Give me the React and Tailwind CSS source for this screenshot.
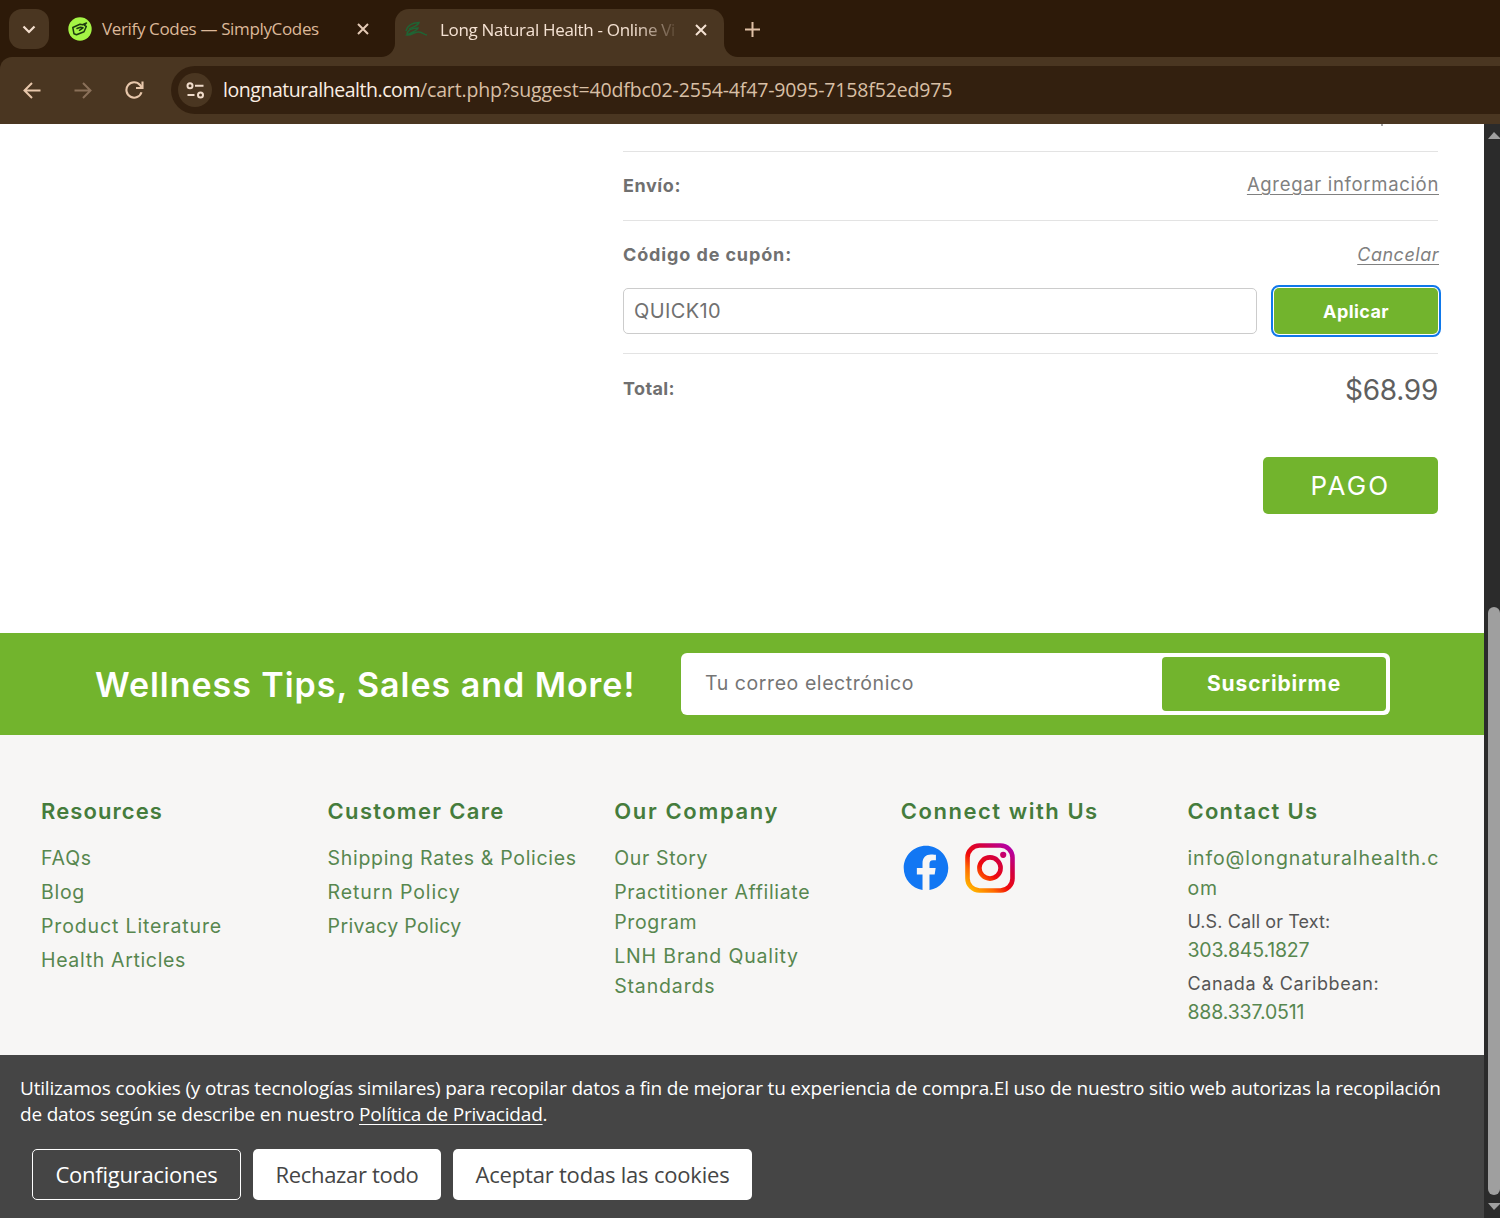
import React, { useState } from 'react';
import { FaFacebook } from 'react-icons/fa';

const columns = [
  {
    title: 'Resources',
    titleClass: 'tracking-[1.09px]',
    links: [
      { label: 'FAQs', cls: 'tracking-[0.8px]' },
      { label: 'Blog', cls: 'tracking-[0.72px]' },
      { label: 'Product Literature', cls: 'tracking-[0.86px]' },
      { label: 'Health Articles', cls: 'tracking-[0.66px]' },
    ],
  },
  {
    title: 'Customer Care',
    titleClass: 'tracking-[1.31px]',
    links: [
      { label: 'Shipping Rates & Policies', cls: 'tracking-[0.68px]' },
      { label: 'Return Policy', cls: 'tracking-[0.89px]' },
      { label: 'Privacy Policy', cls: 'tracking-[0.36px]' },
    ],
  },
  {
    title: 'Our Company',
    titleClass: 'tracking-[1.66px]',
    links: [
      { label: 'Our Story', cls: 'tracking-[0.64px]' },
      { label: 'Practitioner Affiliate Program', cls: 'tracking-[0.67px]' },
      { label: 'LNH Brand Quality Standards', cls: 'tracking-[0.85px]' },
    ],
  },
];

// curved foot of the active tab
const TabFoot = ({ className, flip }) => (
  <svg className={className} width="14" height="14" viewBox="0 0 14 14">
    <path d={flip ? 'M0 0A14 14 0 0 0 14 14H0Z' : 'M14 0A14 14 0 0 1 0 14H14Z'} fill="#4a3621" />
  </svg>
);

const CloseIcon = ({ color }) => (
  <svg width="12" height="12" viewBox="0 0 12 12" fill="none" stroke={color} strokeWidth="2">
    <path d="M1 1l10 10M11 1L1 11" />
  </svg>
);

const InstagramIcon = () => (
  <svg width="50" height="50" viewBox="0 0 50 50" fill="none">
    <defs>
      <linearGradient id="ig" x1="4" y1="50" x2="46" y2="2" gradientUnits="userSpaceOnUse">
        <stop offset="0" stopColor="#ffc800" />
        <stop offset="0.28" stopColor="#ff6a00" />
        <stop offset="0.45" stopColor="#f00a0a" />
        <stop offset="0.68" stopColor="#d5003c" />
        <stop offset="1" stopColor="#b000b4" />
      </linearGradient>
    </defs>
    <rect x="2.5" y="2.5" width="45" height="45" rx="12" stroke="url(#ig)" strokeWidth="4.6" />
    <circle cx="25" cy="25" r="10.6" stroke="url(#ig)" strokeWidth="4.6" />
    <circle cx="38.2" cy="11.8" r="3.1" fill="url(#ig)" />
  </svg>
);

const BrowserBar = () => (
  <header className="h-[124px] bg-[#2d1a09] font-['Open_Sans',sans-serif]">
    <div className="flex h-[57px] items-start">
      <button className="mt-[9px] ml-[9px] flex h-10 w-10 items-center justify-center rounded-[13px] bg-[#4a3621]">
        <svg width="14" height="9" viewBox="0 0 14 9" fill="none" stroke="#f3dfce" strokeWidth="2.2">
          <path d="M1.5 1.5L7 7l5.500-5.500" />
        </svg>
      </button>

      <div className="ml-[19px] flex h-[58px] w-[302px] items-center">
        <svg className="shrink-0" width="24" height="24" viewBox="0 0 24 24" fill="none">
          <circle cx="12" cy="12" r="11.700" fill="#a4f545" />
          <g stroke="#1c3a10" strokeWidth="1.5" strokeLinejoin="round" strokeLinecap="round">
            <path d="M4.800 10.500L12 7.300l2.500.4 4-1.700-2.200 2.200 2 1.300-2.300 5.300-7.500 3-2.500-1z" />
            <path d="M9 11.500l3.500-1.300 2.500.6-3.500 2.500" />
          </g>
        </svg>
        <span className="ml-[10px] w-[242px] text-[17px] tracking-[-0.35px] whitespace-nowrap text-[#dcb899]">
          Verify Codes — SimplyCodes
        </span>
        <span className="ml-[13px] shrink-0">
          <CloseIcon color="#e3c9b4" />
        </span>
      </div>

      <div className="relative mt-[9px] ml-[25px] flex h-12 w-[329px] items-center rounded-t-[14px] bg-[#4a3621] pb-[6px]">
        <TabFoot className="absolute bottom-0 -left-[14px]" />
        <TabFoot className="absolute -right-[14px] bottom-0" flip />
        <svg className="ml-[10px]" width="22" height="18" viewBox="0 0 22 18" fill="none" stroke="#1f6434" strokeWidth="1.500">
          <path d="M1 10C2 5 6 2 14 1.500C13 5 8 6 4 8" />
          <path d="M2 14C2 9 6 7 13 7C12 10 7 11 2 14C7 15 9 10 14 11C18 11.500 19 14 22 14" />
        </svg>
        <span className="ml-[13px] w-[238px] overflow-hidden mask-r-from-[195px] mask-r-to-[240px] text-[17px] tracking-[-0.31px] whitespace-nowrap text-[#f5e2d3]">
          Long Natural Health - Online Vi
        </span>
        <span className="ml-[17px]">
          <CloseIcon color="#f5e2d3" />
        </span>
      </div>

      <svg className="mt-[22px] ml-[21px]" width="15" height="15" viewBox="0 0 15 15" stroke="#dfc0a6" strokeWidth="2">
        <path d="M7.500 0v15M0 7.500h15" />
      </svg>
    </div>

    <div className="flex h-[67px] items-start rounded-tl-[12px] bg-[#4a3621] pt-[9px]">
      <div className="flex h-12 w-[171px] items-center">
        <svg className="ml-[23px]" width="18" height="17" viewBox="0 0 18 17" fill="none" stroke="#e8c7ab" strokeWidth="2">
          <path d="M17.500 8.500H2M9 1L1.500 8.500L9 16" />
        </svg>
        <svg className="ml-[33px]" width="18" height="17" viewBox="0 0 18 17" fill="none" stroke="#8a7059" strokeWidth="2">
          <path d="M0.500 8.500H16M9 1l7.500 7.500L9 16" />
        </svg>
        <svg className="ml-[33px]" width="19" height="18" viewBox="0 0 19 18" fill="none" stroke="#e8c7ab" strokeWidth="2.100">
          <path d="M16.500 11.200A7.700 7.700 0 1 1 15 4l2 2.500" />
          <path d="M17.500 0.500V7H11" />
        </svg>
      </div>
      <div className="flex h-12 flex-1 items-center rounded-l-full bg-[#33200f] pl-[7px]">
        <div className="flex h-[34px] w-[34px] items-center justify-center rounded-full bg-[#4a3621]">
          <svg width="19" height="17" viewBox="0 0 19 17" fill="none" stroke="#f0dccb" strokeWidth="2">
            <circle cx="4" cy="3.700" r="2.500" />
            <path d="M9 3.700h8.500M1.500 13h7" />
            <circle cx="14.500" cy="13" r="2.500" />
          </svg>
        </div>
        <p className="ml-[11px] text-[19.5px] whitespace-nowrap">
          <span className="tracking-[-0.45px] text-[#fbeee3]">longnaturalhealth.com</span>
          <span className="tracking-[-0.16px] text-[#d8bfa5]">
            /cart.php?suggest=40dfbc02-2554-4f47-9095-7158f52ed975
          </span>
        </p>
      </div>
    </div>
  </header>
);

const CartTotals = () => {
  const [coupon, setCoupon] = useState('QUICK10');

  return (
    <section className="h-[509px] bg-white pr-[46px] pl-[623px] text-[18px] text-[#707070]">
      <div className="flex h-7 justify-end border-b border-[#e3e3e3] pr-[55px]">
        <span className="h-[2px] w-[2px] bg-[#a8a8a8]" />
      </div>

      <div className="flex h-[69px] items-center justify-between border-b border-[#e3e3e3] pb-[2px]">
        <strong className="font-bold tracking-[0.57px]">Envío:</strong>
        <a href="#" className="-mr-px text-[18.5px] tracking-[0.68px] text-[#808080] underline underline-offset-[3px]">
          Agregar información
        </a>
      </div>

      <div className="h-[133px] border-b border-[#e3e3e3] pt-5">
        <div className="flex h-[27px] items-center justify-between">
          <strong className="font-bold tracking-[0.88px]">Código de cupón:</strong>
          <a href="#" className="-mr-px tracking-[0.51px] text-[#808080] italic underline underline-offset-[3px]">
            Cancelar
          </a>
        </div>
        <div className="mt-5 flex">
          <input
            type="text"
            className="h-[46px] w-[635px] rounded-[5px] border-[1.5px] border-[#cccccc] px-[10px] text-[20px] tracking-[0.38px] text-[#707070]"
            value={coupon}
            onChange={(e) => setCoupon(e.target.value)}
          />
          <button className="ml-[17px] h-[46px] w-[164px] rounded-[5px] bg-[#72b42d] font-bold tracking-[0.42px] text-white outline-[2.5px] outline-offset-1 outline-[#0f78ea]">
            Aplicar
          </button>
        </div>
      </div>

      <div className="flex h-[68px] items-center justify-between">
        <strong className="font-bold tracking-[0.39px]">Total:</strong>
        <span className="mt-1 text-[28px] tracking-[-0.27px] text-[#5f5f5f]">$68.99</span>
      </div>

      <div className="mt-[35px] flex justify-end">
        <button className="h-[57px] w-[175px] rounded-[5px] bg-[#72b42d] text-[26px] tracking-[2.2px] text-white">
          PAGO
        </button>
      </div>
    </section>
  );
};

const Newsletter = () => (
  <section className="flex h-[102px] items-center bg-[#72b42d] pl-[95px]">
    <h2 className="w-[586px] text-[34px] font-semibold tracking-[0.96px] whitespace-nowrap text-white">
      Wellness Tips, Sales and More!
    </h2>
    <div className="flex h-[62px] w-[709px] rounded-[6px] bg-white p-1">
      <input
        type="email"
        placeholder="Tu correo electrónico"
        className="w-[477px] pl-5 text-[19.5px] tracking-[0.57px] placeholder:text-[#757575]"
      />
      <button className="flex-1 rounded-[4px] bg-[#72b42d] text-[21px] font-bold tracking-[0.85px] text-white">
        Suscribirme
      </button>
    </div>
  </section>
);

const ColumnTitle = ({ className, children }) => (
  <h3 className={`mb-[17px] text-[22px] leading-[30px] font-semibold whitespace-nowrap text-[#457c3c] ${className}`}>
    {children}
  </h3>
);

const Footer = () => (
  <footer className="grid h-[320px] grid-cols-5 bg-[#f7f6f5] pt-[61px] pr-[10px] pl-[41px] text-[19.5px] leading-[30px] text-[#57874f]">
    {columns.map((col) => (
      <div key={col.title} className="pr-[30px]">
        <ColumnTitle className={col.titleClass}>{col.title}</ColumnTitle>
        <ul className="space-y-1">
          {col.links.map((link) => (
            <li key={link.label} className={link.cls}>
              {link.label}
            </li>
          ))}
        </ul>
      </div>
    ))}

    <div>
      <ColumnTitle className="tracking-[1.53px]">Connect with Us</ColumnTitle>
      <div className="flex items-center">
        <FaFacebook className="ml-[2px] h-[46px] w-[46px] text-[#1277f3]" />
        <span className="ml-4">
          <InstagramIcon />
        </span>
      </div>
    </div>

    <div className="whitespace-nowrap">
      <ColumnTitle className="tracking-[1.3px]">Contact Us</ColumnTitle>
      <p className="w-[256px] tracking-[0.9px] break-all whitespace-normal">info@longnaturalhealth.com</p>
      <p className="mt-[5px] text-[18px] leading-7 tracking-[0.11px] text-[#555555]">U.S. Call or Text:</p>
      <p className="leading-7 tracking-[-0.16px]">303.845.1827</p>
      <p className="mt-[5px] text-[18px] leading-[29px] tracking-[0.62px] text-[#555555]">Canada &amp; Caribbean:</p>
      <p className="leading-[29px] tracking-[-0.14px]">888.337.0511</p>
    </div>
  </footer>
);

const CookieBanner = () => (
  <section className="h-[163px] bg-[#454545] pt-5 pl-5 font-['Open_Sans',sans-serif] text-white">
    <p className="text-[19px] leading-[26px] tracking-[-0.183px] whitespace-nowrap">
      Utilizamos cookies (y otras tecnologías similares) para recopilar datos a fin de mejorar tu experiencia de
      compra.El uso de nuestro sitio web autorizas la recopilación
      <br />
      de datos según se describe en nuestro{' '}
      <a href="#" className="underline underline-offset-[3px]">
        Política de Privacidad
      </a>
      .
    </p>
    <div className="mt-[22px] ml-3 flex gap-3 text-[22px]">
      <button className="h-[51px] w-[209px] rounded-[5px] border-[1.5px] border-white tracking-[-0.25px]">
        Configuraciones
      </button>
      <button className="h-[51px] w-[188px] rounded-[5px] bg-white tracking-[-0.32px] text-[#454545]">
        Rechazar todo
      </button>
      <button className="h-[51px] w-[299px] rounded-[5px] bg-white tracking-[-0.2px] text-[#454545]">
        Aceptar todas las cookies
      </button>
    </div>
  </section>
);

const ScrollBar = () => (
  <div className="flex w-4 flex-col items-end overflow-hidden bg-[#2b2b2b]">
    <svg className="mt-2 shrink-0" width="12" height="7" viewBox="0 0 12 7">
      <path d="M0 7L6 0L12 6V7Z" fill="#a0a0a0" />
    </svg>
    <div className="mt-[468px] h-[588px] w-3 shrink-0 rounded-full bg-[#9f9f9f]" />
    <svg className="mt-2 shrink-0" width="12" height="7" viewBox="0 0 12 7">
      <path d="M0 0H12V1L6 7Z" fill="#a0a0a0" />
    </svg>
  </div>
);

const App = () => (
  <div className="h-[1218px] w-[1500px] overflow-hidden bg-white">
    <BrowserBar />
    <div className="flex h-[1094px]">
      <main className="w-[1484px] font-['Inter',sans-serif]">
        <CartTotals />
        <Newsletter />
        <Footer />
        <CookieBanner />
      </main>
      <ScrollBar />
    </div>
  </div>
);

export default App;
